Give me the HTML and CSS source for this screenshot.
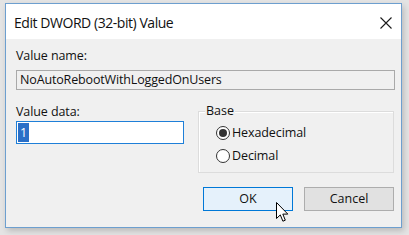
FILE: index.html
```html
<!DOCTYPE html>
<html>
<head>
<meta charset="utf-8">
<link rel="stylesheet" href="styles.css">
</head>
<body>
<div class="window">
  <div class="titlebar">
    <span class="title">Edit DWORD (32-bit) Value</span>
    <svg class="close" width="12" height="12" viewBox="0 0 12 12"><path d="M0.5 0.5L11.5 11.5M11.5 0.5L0.5 11.5" stroke="#1a1a1a" stroke-width="1.1" fill="none"/></svg>
  </div>
  <div class="content">
    <div class="label">Value name:</div>
    <div class="field name">NoAutoRebootWithLoggedOnUsers</div>
    <div class="row">
      <div class="datacol">
        <div class="label">Value data:</div>
        <div class="field data"><span class="sel">1</span></div>
      </div>
      <div class="group">
        <span class="legend">Base</span>
        <div class="radio"><span class="dot checked"></span><span>Hexadecimal</span></div>
        <div class="radio"><span class="dot"></span><span>Decimal</span></div>
      </div>
    </div>
    <div class="buttons">
      <div class="btn ok">OK</div>
      <div class="btn">Cancel</div>
    </div>
  </div>
  <svg class="cursor" width="13" height="21" viewBox="0 0 13 21"><path d="M0.5 0.5V16.5L4.3 12.9L6.9 19.2L9.3 18.2L6.8 12.1H11.8Z" fill="#fff" stroke="#000" stroke-width="1" stroke-linejoin="round"/></svg>
</div>
</body>
</html>
```
FILE: styles.css
```css
* { box-sizing: border-box; }
html, body { margin: 0; padding: 0; }
body {
  width: 409px;
  height: 235px;
  background: #e4e4e4;
  font-family: "Open Sans", "Noto Sans", sans-serif;
  color: #111;
  padding: 3px 0 0 5px;
  overflow: hidden;
}
.window {
  position: relative;
  width: 397px;
  height: 225px;
  border: 1px solid #6d9fcf;
  background: #f0f0f0;
  box-shadow: 2px 3px 6px rgba(0,0,0,0.18);
}
.titlebar {
  height: 35px;
  background: #fff;
  display: flex;
  align-items: center;
  justify-content: space-between;
  padding: 0 9px 0 8px;
}
.title {
  font-size: 14px;
  letter-spacing: -0.45px;
  color: #111;
  margin-top: 1px;
}
.close { margin-top: 2px; }
.content {
  padding: 8px 5px 0 10px;
  font-size: 12.5px;
}
.label {
  line-height: 17px;
  height: 17px;
  letter-spacing: -0.1px;
}
.field {
  height: 20px;
  line-height: 18px;
  border: 1px solid #a9a9a9;
  padding-left: 3px;
  margin-top: 6px;
}
.name {
  background: #f0f0f0;
  width: 379px;
  letter-spacing: -0.15px;
}
.row {
  display: flex;
  margin-top: 16px;
}
.datacol {
  width: 168px;
}
.datacol .label { margin-top: -3px; }
.data {
  height: 23px;
  background: #fff;
  border-color: #1e7fd8;
  margin-top: 1px;
  padding-left: 1px;
  padding-top: 1px;
  line-height: 19px;
}
.sel {
  display: inline-block;
  background: #2a6fc7;
  color: #fff;
  padding: 0 2px;
  line-height: 19px;
}
.group {
  position: relative;
  margin-left: 14px;
  margin-top: 5px;
  width: 196px;
  height: 62px;
  border: 1px solid #dcdcdc;
  box-shadow: inset 1px 1px 0 #fff;
  padding: 9px 0 0 17px;
}
.legend {
  position: absolute;
  left: 6px;
  top: -10px;
  padding: 0 1px;
  background: #f0f0f0;
  line-height: 17px;
}
.radio {
  display: flex;
  align-items: center;
  gap: 2px;
  height: 23px;
  font-size: 12.5px;
  letter-spacing: -0.1px;
}
.dot {
  width: 14px;
  height: 14px;
  border: 1px solid #333;
  border-radius: 50%;
  background: #fff;
  display: flex;
  align-items: center;
  justify-content: center;
}
.dot.checked::after {
  content: "";
  width: 8px;
  height: 8px;
  border-radius: 50%;
  background: #333;
}
.buttons {
  display: flex;
  justify-content: flex-end;
  gap: 11px;
  margin-top: 14px;
  padding-right: 2px;
}
.btn {
  width: 90px;
  height: 24px;
  border: 1px solid #adadad;
  background: #e1e1e1;
  text-align: center;
  line-height: 22px;
  font-size: 12.5px;
}
.btn.ok {
  background: #e5f1fb;
  border-color: #0078d7;
}
.cursor {
  position: absolute;
  left: 270px;
  top: 198px;
}
```
